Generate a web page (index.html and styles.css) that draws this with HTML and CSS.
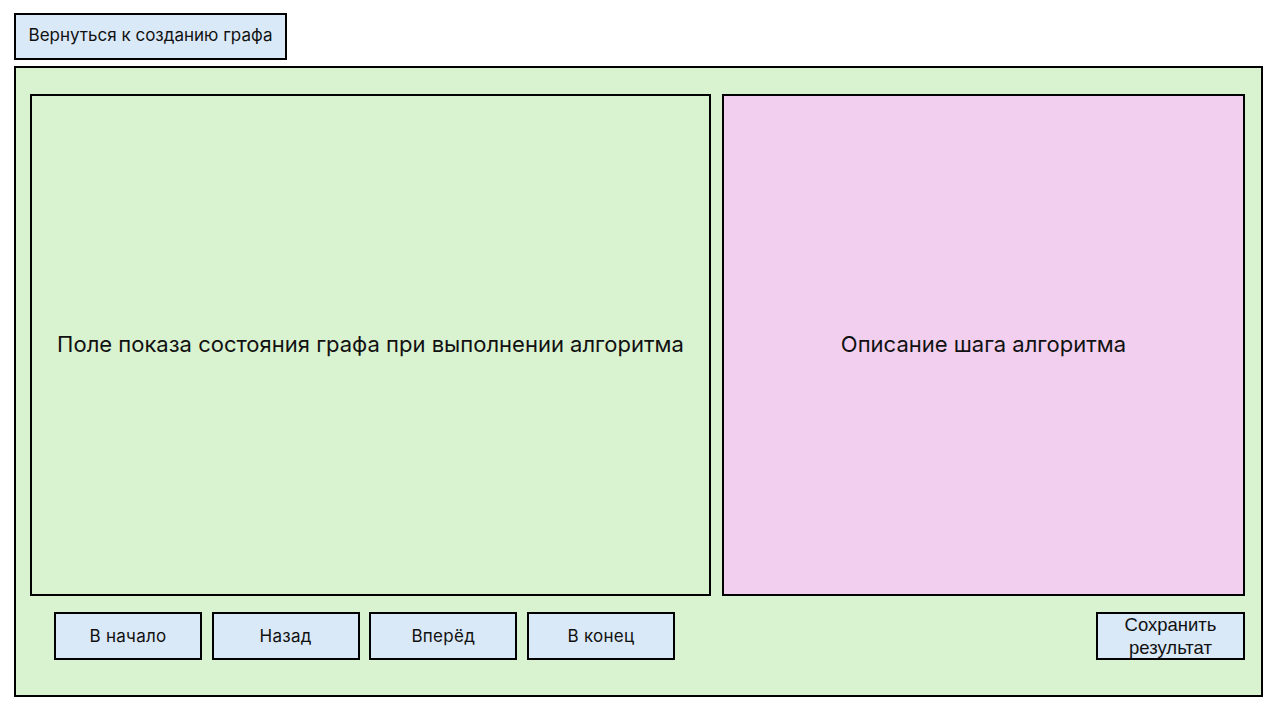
FILE: index.html
```html
<!DOCTYPE html>
<html lang="ru">
<head>
<meta charset="utf-8">
<title>Алгоритм</title>
<link rel="stylesheet" href="styles.css">
</head>
<body>
<div class="page">
  <div class="back-btn">Вернуться к созданию графа</div>
  <div class="main">
    <div class="panels">
      <div class="panel graph">Поле показа состояния графа при выполнении алгоритма</div>
      <div class="panel desc">Описание шага алгоритма</div>
    </div>
    <div class="controls">
      <div class="nav">
        <div class="btn">В начало</div>
        <div class="btn">Назад</div>
        <div class="btn">Вперёд</div>
        <div class="btn">В конец</div>
      </div>
      <div class="btn save">Сохранить результат</div>
    </div>
  </div>
</div>
</body>
</html>
```
FILE: styles.css
```css
* { box-sizing: border-box; }
html, body { margin: 0; padding: 0; background: #ffffff; }
body {
  font-family: Inter, "Noto Sans", "DejaVu Sans", sans-serif;
  color: #111;
}
.page {
  width: 1280px;
  height: 720px;
  padding: 13px 0 0 14px;
}
.back-btn {
  width: 273px;
  height: 47px;
  border: 2px solid #000;
  background: #dae9f7;
  display: flex;
  align-items: center;
  justify-content: center;
  font-size: 17px;
  padding-bottom: 3px;
}
.main {
  margin-top: 6px;
  width: 1249px;
  height: 631px;
  border: 2px solid #000;
  background: #d9f2d0;
  padding: 26px 16px 0 14px;
}
.panels {
  display: flex;
  gap: 11px;
  height: 502px;
}
.panel {
  border: 2px solid #000;
  display: flex;
  align-items: center;
  justify-content: center;
  font-size: 22px;
  text-align: center;
  padding-bottom: 2px;
}
.graph { width: 681px; background: #d9f2d0; }
.desc { width: 523px; background: #f2cfee; }
.controls {
  margin-top: 16px;
  display: flex;
  justify-content: space-between;
  padding-left: 24px;
}
.nav { display: flex; gap: 9.67px; }
.btn {
  width: 148px;
  height: 48px;
  border: 2px solid #000;
  background: #dae9f7;
  display: flex;
  align-items: center;
  justify-content: center;
  font-size: 17px;
  letter-spacing: 0.3px;
  text-align: center;
}
.save {
  width: 149px;
  font-family: "Liberation Sans", Arial, sans-serif;
  font-size: 18.5px;
  letter-spacing: 0;
  line-height: 23px;
  padding: 0 10px 0 10px;
}
```
